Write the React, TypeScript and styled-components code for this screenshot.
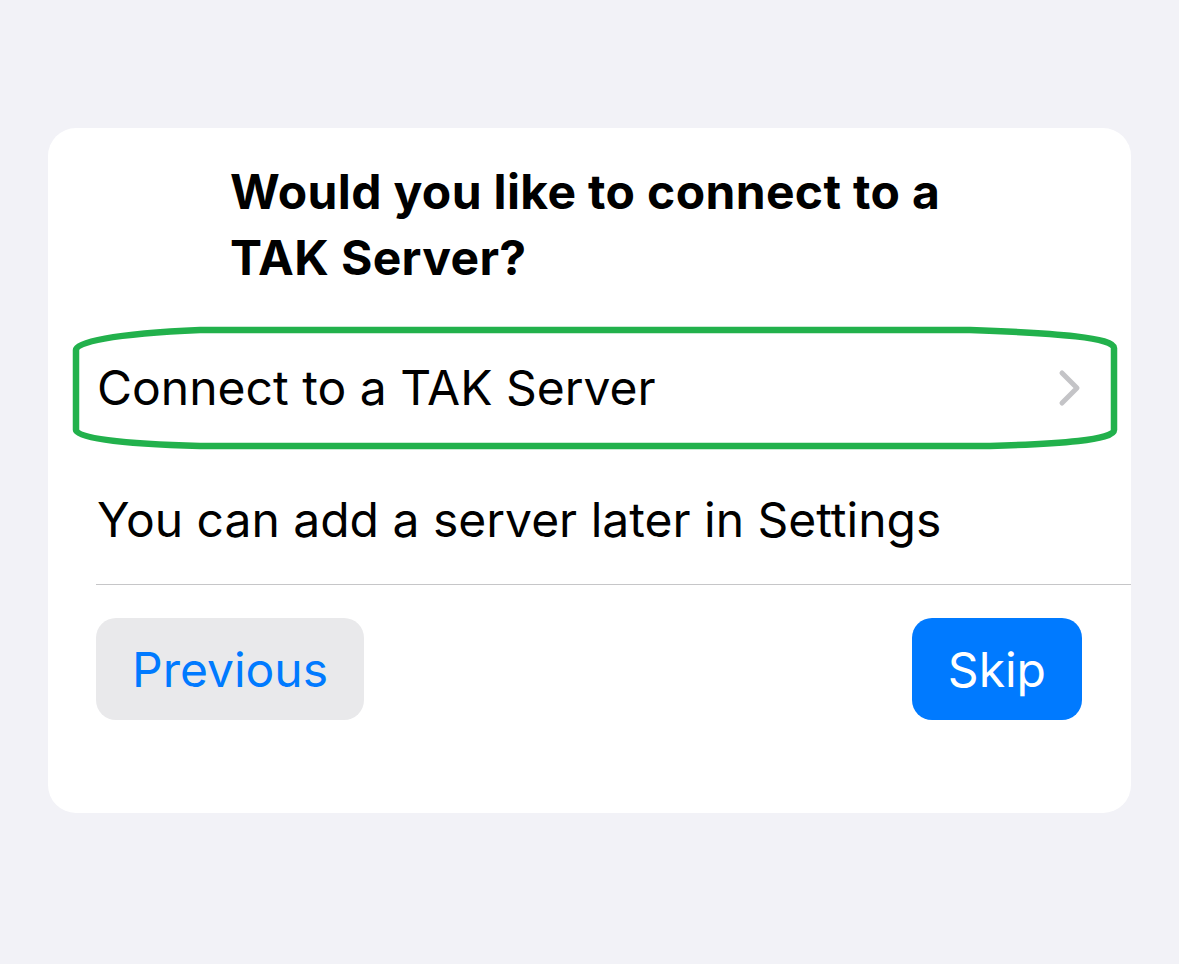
import React from "react";
import styled, { createGlobalStyle } from "styled-components";

const Global = createGlobalStyle`
  html, body { margin: 0; padding: 0; background: #f2f2f7; }
  body { font-family: Inter, "Noto Sans", "Liberation Sans", sans-serif; -webkit-font-smoothing: antialiased; }
`;

const Page = styled.div`
  min-height: 964px;
  box-sizing: border-box;
  padding: 128px 48px 0 48px;
  background: #f2f2f7;
`;

const Card = styled.div`
  position: relative;
  width: 1083px;
  background: #ffffff;
  border-radius: 28px;
  padding: 31px 0 93px 0;
  box-sizing: border-box;
`;

const Title = styled.h1`
  margin: 0;
  padding: 0 0 0 182px;
  width: 780px;
  font-size: 48px;
  line-height: 66px;
  font-weight: 700;
  color: #000;
  letter-spacing: 0.35px;
`;

const Row = styled.div`
  position: relative;
  margin-top: 42px;
  height: 110px;
  padding: 0 49px;
  display: flex;
  align-items: center;
  justify-content: space-between;
  font-size: 48px;
  color: #000;
`;

const RowLabel = styled.span`
  line-height: 66px;
`;

const Chevron = styled.svg`
  width: 24px;
  height: 38px;
`;

const Annotation = styled.svg`
  position: absolute;
  left: 22px;
  top: -9px;
  width: 1050px;
  height: 128px;
  pointer-events: none;
  overflow: visible;
`;

const Hint = styled.p`
  margin: 44px 0 0 0;
  padding: 0 49px;
  font-size: 48px;
  line-height: 66px;
  color: #000;
`;

const Separator = styled.hr`
  margin: 31px 0 0 48px;
  border: 0;
  height: 1px;
  background: #c6c6c8;
`;

const Footer = styled.div`
  margin-top: 33px;
  padding: 0 49px 0 48px;
  display: flex;
  justify-content: space-between;
`;

const Button = styled.button<{ $primary?: boolean }>`
  height: 102px;
  padding: 0 ${(p) => (p.$primary ? "36px" : "36px")};
  border: 0;
  border-radius: 20px;
  font-family: inherit;
  font-size: 48px;
  font-weight: 400;
  background: ${(p) => (p.$primary ? "#007aff" : "#e9e9eb")};
  color: ${(p) => (p.$primary ? "#ffffff" : "#007aff")};
`;

export default function App() {
  return (
    <>
      <Global />
      <Page>
        <Card>
          <Title>
            Would you like to connect to a
            <br />
            TAK Server?
          </Title>
          <Row>
            <RowLabel>Connect to a TAK Server</RowLabel>
            <Chevron viewBox="0 0 24 38">
              <path
                d="M4 4 L19 19 L4 34"
                fill="none"
                stroke="#c4c4c7"
                strokeWidth="5"
                strokeLinecap="round"
                strokeLinejoin="round"
              />
            </Chevron>
            <Annotation viewBox="0 0 1050 128">
              <path
                d="M 6 26 C 6 18, 40 10, 130 6 L 900 6 C 990 9, 1044 14, 1044 24 L 1044 106 C 1044 116, 990 120, 920 122 L 130 122 C 50 120, 6 114, 6 106 Z"
                fill="none"
                stroke="#22b14c"
                strokeWidth="6.5"
                strokeLinejoin="round"
              />
            </Annotation>
          </Row>
          <Hint>You can add a server later in Settings</Hint>
          <Separator />
          <Footer>
            <Button>Previous</Button>
            <Button $primary>Skip</Button>
          </Footer>
        </Card>
      </Page>
    </>
  );
}
